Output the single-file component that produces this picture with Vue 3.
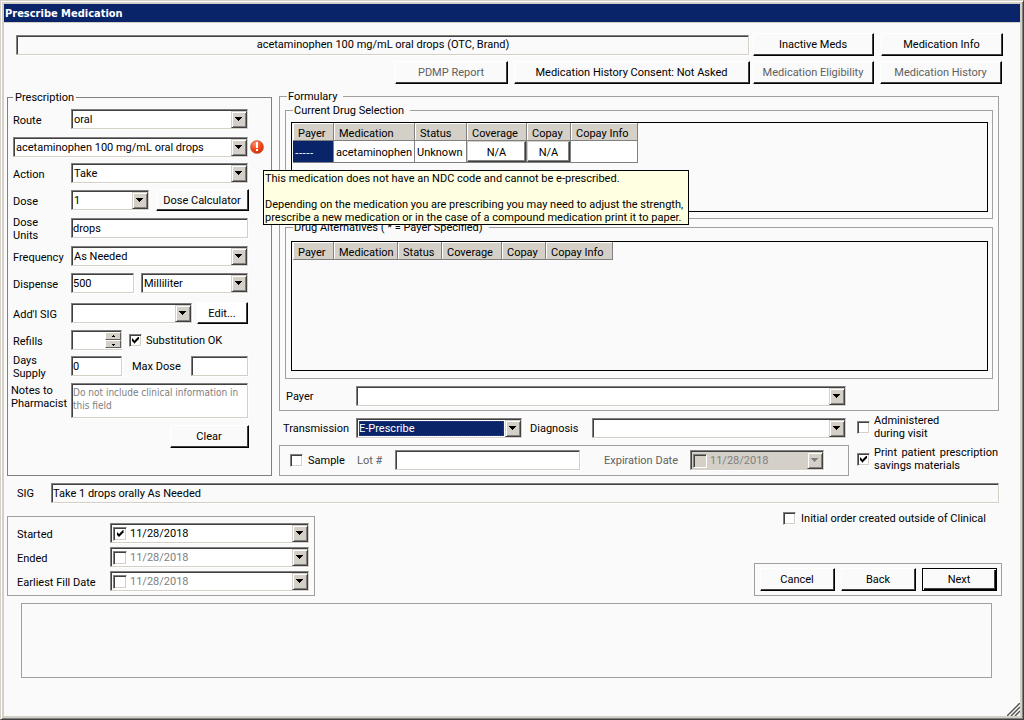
<script setup>
import { h, ref } from 'vue'

const Arrow = () =>
  h('svg', { class: 'arrow', viewBox: '0 0 14 15', 'aria-hidden': 'true' }, [
    h('path', { class: 'tri', d: 'M3 5h7v1h-1v1h-1v1h-1v1h-1v-1h-1v-1h-1v-1h-1z' }),
  ])

const notes = ref('')
const notesHint = 'Do not include clinical information in\nthis field'
const currentHeads = ['Payer', 'Medication', 'Status', 'Coverage', 'Copay', 'Copay Info']
const dates = ref([
  { id: 'started', label: 'Started', on: true, value: '11/28/2018' },
  { id: 'ended', label: 'Ended', on: false, value: '11/28/2018' },
  { id: 'fill', label: 'Earliest Fill Date', on: false, value: '11/28/2018' },
])
</script>

<template>
  <div class="window">
    <header class="title">Prescribe Medication</header>
    <main class="content">
      <div class="top-row">
        <input class="sunk flat drug" aria-label="Selected drug" readonly value="acetaminophen 100 mg/mL oral drops (OTC, Brand)" />
        <button class="btn w121">Inactive Meds</button>
        <button class="btn w122">Medication Info</button>
      </div>
      <div class="top-row second">
        <button class="btn w113" disabled>PDMP Report</button>
        <button class="btn w236">Medication History Consent: Not Asked</button>
        <button class="btn w121" disabled>Medication Eligibility</button>
        <button class="btn w122" disabled>Medication History</button>
      </div>

      <div class="columns">
        <fieldset class="rx">
          <legend>Prescription</legend>
          <div class="row g8">
            <label for="route">Route</label>
            <div class="combo grow"><select id="route"><option>oral</option></select><Arrow /></div>
          </div>
          <div class="row g6">
            <div class="combo grow"><select aria-label="Drug"><option>acetaminophen 100 mg/mL oral drops</option></select><Arrow /></div>
            <div class="alert">
              <svg class="alert-icon" viewBox="0 0 14 14" width="14" height="14" role="img" aria-label="Error">
                <defs>
                  <radialGradient id="ball" cx="38%" cy="25%" r="75%">
                    <stop offset="0" stop-color="#ff9070" />
                    <stop offset=".5" stop-color="#f85020" />
                    <stop offset="1" stop-color="#d03000" />
                  </radialGradient>
                </defs>
                <circle cx="7" cy="7" r="6.6" fill="url(#ball)" stroke="#b08070" stroke-width=".6" />
                <path d="M6 2h2v6H6zM6 9h2v2H6z" fill="#fff" />
              </svg>
              <div class="tip" role="tooltip">This medication does not have an NDC code and cannot be e-prescribed.<br /><br />Depending on the medication you are prescribing you may need to adjust the strength,<br />prescribe a new medication or in the case of a compound medication print it to paper.</div>
            </div>
          </div>
          <div class="row g7">
            <label for="action">Action</label>
            <div class="combo grow"><select id="action"><option>Take</option></select><Arrow /></div>
          </div>
          <div class="row g8">
            <label for="dose">Dose</label>
            <div class="combo dose"><select id="dose"><option>1</option></select><Arrow /></div>
            <button class="btn small calc">Dose Calculator</button>
          </div>
          <div class="row g8">
            <label for="units">Dose<br />Units</label>
            <input id="units" class="sunk grow" value="drops" />
          </div>
          <div class="row g7">
            <label for="freq">Frequency</label>
            <div class="combo grow"><select id="freq"><option>As Needed</option></select><Arrow /></div>
          </div>
          <div class="row g10">
            <label for="disp">Dispense</label>
            <input id="disp" class="sunk disp" value="500" />
            <div class="combo grow"><select aria-label="Dispense unit"><option>Milliliter</option></select><Arrow /></div>
          </div>
          <div class="row g7">
            <label for="addl">Add'l SIG</label>
            <div class="combo grow"><select id="addl"><option></option></select><Arrow /></div>
            <button class="btn small edit">Edit...</button>
          </div>
          <div class="row g6">
            <label for="refills">Refills</label>
            <div class="spin sunk">
              <input id="refills" value="" />
              <span class="spin-btns">
                <button aria-label="More"><svg viewBox="0 0 5 3" width="5" height="3"><path d="M2 0h1v1h1v1H1V1h1z" /></svg></button>
                <button aria-label="Fewer"><svg viewBox="0 0 5 3" width="5" height="3"><path d="M1 1h3v1H3v1H2V2H1z" /></svg></button>
              </span>
            </div>
            <label class="check sub"><input type="checkbox" checked />Substitution OK</label>
          </div>
          <div class="row g7">
            <label for="days">Days<br />Supply</label>
            <input id="days" class="sunk days" value="0" />
            <label for="max" class="max-label">Max Dose</label>
            <input id="max" class="sunk max" />
          </div>
          <div class="row notes g7">
            <label for="notes">Notes to<br />Pharmacist</label>
            <textarea id="notes" v-model="notes" class="sunk grow" :placeholder="notesHint"></textarea>
          </div>
          <button class="btn clear">Clear</button>
        </fieldset>

        <div class="right">
          <fieldset class="formulary">
            <legend>Formulary</legend>
            <fieldset class="inner current">
              <legend>Current Drug Selection</legend>
              <div class="grid-box">
                <table>
                  <colgroup><col class="c41" /><col class="c81" /><col class="c52" /><col class="c60" /><col class="c44" /><col class="c67" /></colgroup>
                  <thead><tr><th v-for="t in currentHeads" :key="t">{{ t }}</th></tr></thead>
                  <tbody>
                    <tr>
                      <td class="picked">-----</td><td>acetaminophen</td><td>Unknown</td>
                      <td class="cell-btn"><button>N/A</button></td>
                      <td class="cell-btn"><button>N/A</button></td>
                      <td></td>
                    </tr>
                  </tbody>
                </table>
              </div>
            </fieldset>
            <fieldset class="inner alternatives">
              <legend>Drug Alternatives ( * = Payer Specified)</legend>
              <div class="grid-box">
                <table>
                  <colgroup><col class="c41" /><col class="c65" /><col class="c44" /><col class="c60" /><col class="c44" /><col class="c67" /></colgroup>
                  <thead><tr><th v-for="t in currentHeads" :key="t">{{ t }}</th></tr></thead>
                </table>
              </div>
            </fieldset>
            <div class="row payer">
              <label for="payer">Payer</label>
              <div class="combo grow"><select id="payer"><option></option></select><Arrow /></div>
            </div>
          </fieldset>

          <div class="send">
            <div class="send-main">
              <div class="row trans">
                <label for="trans" class="trans-label">Transmission</label>
                <div class="combo trans-combo"><select id="trans" class="focused"><option>E-Prescribe</option></select><Arrow /></div>
                <label for="diag" class="diag-label">Diagnosis</label>
                <div class="combo grow"><select id="diag"><option></option></select><Arrow /></div>
              </div>
              <div class="sample">
                <label class="check sample-check"><input type="checkbox" />Sample</label>
                <label for="lot" class="dim lot-label">Lot #</label>
                <input id="lot" class="sunk lot" />
                <label for="exp" class="dim exp-label">Expiration Date</label>
                <div class="combo date off">
                  <div class="date-in"><input type="checkbox" disabled aria-label="Use expiration date" /><input id="exp" class="date-text" value="11/28/2018" disabled /></div>
                  <Arrow />
                </div>
              </div>
            </div>
            <div class="send-side">
              <label class="check"><input type="checkbox" /><span>Administered<br />during visit</span></label>
              <label class="check"><input type="checkbox" checked /><span class="just">Print patient prescription savings materials</span></label>
            </div>
          </div>
        </div>
      </div>

      <div class="row sig">
        <label for="sig">SIG</label>
        <input id="sig" class="sunk flat grow" readonly value="Take 1 drops orally As Needed" />
      </div>

      <div class="lower">
        <div class="dates">
          <div v-for="d in dates" :key="d.id" class="row">
            <label :for="d.id">{{ d.label }}</label>
            <div class="combo grow date">
              <div class="date-in"><input v-model="d.on" type="checkbox" :aria-label="d.label + ' enabled'" /><input :id="d.id" v-model="d.value" class="date-text" :class="{ grey: !d.on }" /></div>
              <Arrow />
            </div>
          </div>
        </div>
        <div class="lower-right">
          <label class="check outside"><input type="checkbox" />Initial order created outside of Clinical</label>
          <div class="actions">
            <button class="btn">Cancel</button>
            <button class="btn">Back</button>
            <button class="btn primary">Next</button>
          </div>
        </div>
      </div>

      <div class="message"></div>
      <svg class="grip" viewBox="0 0 13 13" width="13" height="13" aria-hidden="true">
        <path d="M0 13L13 0M4 13L13 4M8 13L13 8" stroke="#55554f" stroke-width="1.5" fill="none" />
      </svg>
    </main>
  </div>
</template>

<style>
body { background: #fafafa; }
</style>

<style scoped>
.window, .window * { box-sizing: border-box; }
.window {
  min-height: 100vh;
  display: flex;
  flex-direction: column;
  padding: 2px;
  border: 1px solid;
  border-color: #d4d0c8 #404040 #404040 #d4d0c8;
  box-shadow: inset 1px 1px #fff, inset -1px -1px #808080, inset 3px 3px #d4d0c8, inset -3px -3px #d4d0c8;
  background: #fafafa;
  color: #000;
  font: 11px/13px Roboto, "DejaVu Sans Condensed", sans-serif;
}
.title {
  margin: 1px 1px 0;
  height: 19px;
  flex: none;
  background: #0a246a;
  border-bottom: 1px solid #d4d0c8;
  color: #fff;
  font-family: "DejaVu Sans Condensed", "DejaVu Sans", sans-serif;
  font-weight: bold;
  line-height: 19px;
  padding-left: 1px;
}
.content { flex: 1; padding: 10px 1px 0; position: relative; }
button, input, select, textarea { font: inherit; color: inherit; margin: 0; padding: 0; border: 0; border-radius: 0; outline: 0; }
label, legend { white-space: nowrap; }

.btn {
  height: 23px;
  flex: none;
  background: #fafafa;
  border: 1px solid;
  border-color: #fff #000 #000 #fff;
  box-shadow: inset -1px -1px #404040;
  padding: 0 1px 0 0;
  white-space: nowrap;
}
.btn:disabled { color: #606060; }
.btn.small { height: 22px; }
.w113 { width: 113px; }
.w121 { width: 121px; }
.w122 { width: 122px; }
.w236 { width: 236px; }

.sunk, .combo {
  height: 20px;
  background: #fff;
  border: 1px solid;
  border-color: #808080 #d4d0c8 #d4d0c8 #808080;
  box-shadow: inset 1px 1px #404040, 1px 1px #fff;
  padding: 1px 0 0 1px;
  min-width: 0;
}
.sunk.flat { background: #fafafa; padding-bottom: 1px; }
.grow { flex: 1; }
.combo { display: grid; grid-template: 17px / minmax(0, 1fr); }
.combo > * { grid-area: 1 / 1; }
select { appearance: none; background: transparent; height: 17px; width: 100%; padding: 0 18px 0 1px; white-space: nowrap; }
.focused { width: auto; height: 15px; margin: 1px 17px 1px 1px; padding: 0; background: #0a246a; color: #fff; outline: 1px dotted #444; outline-offset: -1px; }
.arrow {
  justify-self: end;
  width: 16px;
  height: 17px;
  background: #d4d0c8;
  border: 1px solid;
  border-color: #d4d0c8 #404040 #404040 #d4d0c8;
  box-shadow: inset 1px 1px #fff, inset -1px -1px #808080;
  pointer-events: none;
}

.top-row { display: flex; align-items: center; margin: 0 17px 0 12px; height: 23px; }
.top-row .drug { flex: 1; text-align: center; margin-right: 4px; }
.top-row .w121 { margin-right: 7px; }
.top-row.second { margin-top: 5px; margin-right: 18px; justify-content: flex-end; }
.second .w113 { margin-right: 6px; }
.second .w236 { margin-right: 3px; }
.top-row.second .w121 { margin-right: 6px; }

.columns { display: flex; gap: 7px; margin: 6px 21px 0 3px; }
fieldset { margin: 0; padding: 0; border: 1px solid #a0a0a0; min-width: 0; }
legend { padding: 0 6px 0 1px; margin-left: 2px; }
.rx { width: 265px; flex: none; margin-top: 1px; padding: 5px 23px 27px 5px; border-color: #808080; }
.rx > legend { margin-left: 0; padding: 0 2px; }
.row { display: flex; align-items: center; height: 20px; position: relative; }
.rx .row > label:first-child { width: 58px; flex: none; padding-top: 2px; }
.g6 { margin-bottom: 6px; }
.g7 { margin-bottom: 7px; }
.g8 { margin-bottom: 8px; }
.g10 { margin-bottom: 10px; }
.dose { width: 78px; flex: none; }
.calc { width: 93px; margin: 0 -1px 0 7px; }
.disp { width: 63px; margin-right: 7px; }
.edit { width: 51px; margin-left: 5px; background: #fff; }
.alert { width: 14px; height: 14px; position: absolute; left: 237px; top: 3px; }
.alert-icon { display: block; }
.tip {
  position: absolute;
  z-index: 5;
  left: 13px;
  top: 30px;
  width: 426px;
  height: 55px;
  padding: 1px 0 0 1px;
  background: #ffffe1;
  border: 1px solid #000;
  white-space: nowrap;
}
.spin { width: 51px; display: flex; justify-content: space-between; }
.spin input { width: 31px; background: transparent; }
.spin-btns { width: 16px; display: grid; grid-template-rows: 8px 8px; }
.spin-btns button { display: grid; place-items: center; background: #d4d0c8; border: 1px solid; border-color: #fff #606060 #606060 #fff; }
.check { display: flex; align-items: center; gap: 5px; }
input[type="checkbox"] {
  appearance: none;
  flex: none;
  width: 13px;
  height: 13px;
  background: #fff;
  border: 1px solid;
  border-color: #808080 #fff #fff #808080;
  box-shadow: inset 1px 1px #404040, inset -1px -1px #d4d0c8;
  display: grid;
  place-items: center;
}
input[type="checkbox"]:checked::before {
  content: "";
  width: 7px;
  height: 7px;
  background: #000;
  clip-path: polygon(0 2px, 1px 2px, 1px 3px, 2px 3px, 2px 4px, 3px 4px, 3px 3px, 4px 3px, 4px 2px, 5px 2px, 5px 1px, 6px 1px, 6px 0, 7px 0, 7px 3px, 6px 3px, 6px 4px, 5px 4px, 5px 5px, 4px 5px, 4px 6px, 3px 6px, 3px 7px, 2px 7px, 2px 6px, 1px 6px, 1px 5px, 0 5px);
}
.sub { margin-left: 7px; gap: 4px; }
.days { width: 51px; }
.max-label { width: 69px; padding-left: 10px; flex: none; }
.max { width: 57px; }
.notes { height: 35px; margin-left: -2px; align-items: stretch; }
.rx .row.notes > label:first-child { width: 60px; padding-top: 1px; }
textarea.sunk { height: 35px; resize: none; overflow: hidden; padding: 2px 0 0 1px; font-family: "DejaVu Sans Condensed", "DejaVu Sans", sans-serif; font-size: 10px; white-space: pre; }
textarea::placeholder { color: #808080; white-space: pre; }
.clear { display: block; width: 79px; margin-left: auto; margin-right: -1px; }

.right { flex: 1; min-width: 0; }
.formulary { padding: 1px 5px 4px; }
.inner { padding: 5px 4px 6px 5px; }
.alternatives { margin-top: 2px; padding: 7px 4px 7px 5px; }
.grid-box { border: 1px solid #000; height: 90px; }
.alternatives .grid-box { height: 130px; }
table { table-layout: fixed; border-collapse: separate; border-spacing: 0; width: 0; margin-left: 1px; }
.c41 { width: 41px; }
.c81 { width: 81px; }
.c65 { width: 64px; }
.c52 { width: 52px; }
.c60 { width: 60px; }
.c44 { width: 44px; }
.c67 { width: 67px; }
th { height: 18px; background: #d4d0c8; font-weight: normal; text-align: left; padding: 3px 0 0 5px; border-right: 1px solid #808080; border-bottom: 1px solid #808080; box-shadow: inset 1px 1px #fff; white-space: nowrap; }
td { height: 22px; background: #fff; padding: 1px 0 0 2px; border-right: 1px solid #808080; border-bottom: 1px solid #808080; white-space: nowrap; }
td.picked { background: #0a246a; color: #fff; font-family: "Liberation Sans", sans-serif; }
td.cell-btn { padding: 0; }
td button { display: block; width: 100%; height: 21px; padding: 1px 0 0; background: #fff; border: 1px solid; border-color: #d4d0c8 #404040 #404040 #d4d0c8; box-shadow: inset -1px -1px #808080; }
.payer { margin: 7px 147px 0 1px; }
.payer label { width: 70px; }

.send { display: flex; gap: 8px; }
.send-main { flex: 1; min-width: 0; padding-top: 7px; }
.trans { padding: 0 3px 0 4px; }
.trans-label { width: 73px; flex: none; }
.trans-combo { width: 166px; flex: none; margin-right: 8px; }
.diag-label { width: 62px; flex: none; }
.sample { margin-top: 7px; height: 31px; border: 1px solid #a0a0a0; display: flex; align-items: center; padding: 0 24px 1px 10px; }
.sample-check { width: 67px; flex: none; }
.dim { color: #606060; }
.lot-label { width: 38px; flex: none; }
.lot { flex: 1; }
.exp-label { width: 86px; margin-left: 24px; flex: none; }
.sample .date { width: 134px; flex: none; }
.date-in { display: flex; align-items: center; gap: 3px; padding: 0 17px 0 1px; }
.date-text { flex: 1; min-width: 0; background: transparent; }
.grey { color: #808080; }
.date input[type="checkbox"] { width: 14px; height: 14px; }
.off { background: #d4d0c8; }
.off .date-text { color: #808080; }
.off input[type="checkbox"] { background: #d4d0c8; }
.off .arrow { fill: #808080; }
.send-side { width: 142px; flex: none; padding-top: 3px; display: flex; flex-direction: column; gap: 6px; }
.send-side .check { gap: 4px; }
.send-side .just { flex: 1; padding-right: 1px; text-align: justify; white-space: normal; }

.sig { margin: 7px 21px 0 13px; }
.sig label { width: 34px; }
.lower { display: flex; justify-content: space-between; margin: 9px 18px 0 3px; }
.dates { width: 308px; margin-top: 4px; border: 1px solid #a0a0a0; padding: 6px 5px 4px 9px; display: flex; flex-direction: column; gap: 4px; }
.dates label { width: 93px; flex: none; padding-top: 2px; }
.lower-right { display: flex; flex-direction: column; justify-content: space-between; align-items: flex-end; }
.outside { margin-right: 16px; }
.actions { border: 1px solid #a0a0a0; height: 33px; padding: 4px 4px 0 5px; display: flex; gap: 6px; }
.actions .btn { width: 75px; }
.primary { border-color: #000; box-shadow: inset 1px 1px #fff, inset -1px -1px #000, inset -2px -2px #404040; }
.message { margin: 7px 28px 0 17px; height: 75px; border: 1px solid #a0a0a0; }
.grip { position: absolute; right: 1px; bottom: 1px; }
</style>
